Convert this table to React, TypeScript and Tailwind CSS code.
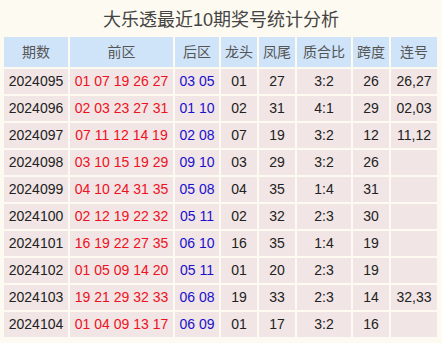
const rows = [
  ["2024095", "01 07 19 26 27", "03 05", "01", "27", "3:2", "26", "26,27"],
  ["2024096", "02 03 23 27 31", "01 10", "02", "31", "4:1", "29", "02,03"],
  ["2024097", "07 11 12 14 19", "02 08", "07", "19", "3:2", "12", "11,12"],
  ["2024098", "03 10 15 19 29", "09 10", "03", "29", "3:2", "26", ""],
  ["2024099", "04 10 24 31 35", "05 08", "04", "35", "1:4", "31", ""],
  ["2024100", "02 12 19 22 32", "05 11", "02", "32", "2:3", "30", ""],
  ["2024101", "16 19 22 27 35", "06 10", "16", "35", "1:4", "19", ""],
  ["2024102", "01 05 09 14 20", "05 11", "01", "20", "2:3", "19", ""],
  ["2024103", "19 21 29 32 33", "06 08", "19", "33", "2:3", "14", "32,33"],
  ["2024104", "01 04 09 13 17", "06 09", "01", "17", "3:2", "16", ""],
];

const heads = ["期数", "前区", "后区", "龙头", "凤尾", "质合比", "跨度", "连号"];
const widths = ["w-[64px]", "w-[103px]", "w-[44px]", "w-[36px]", "w-[36px]", "w-[54px]", "w-[36px]", "w-[46px]"];

export default function App() {
  return (
    <div className="w-[442px] h-[343px] bg-[#fdfaf1] font-['Liberation_Sans','Noto_Sans_CJK_SC',sans-serif] overflow-hidden">
      <div className="h-[37px] pt-[8px] text-center text-[18px] leading-[24px] text-[#444]">
        大乐透最近10期奖号统计分析
      </div>
      <table className="table-fixed border-separate border-spacing-[2px] -mt-[2px] ml-[2px] text-[14px] text-center">
        <thead>
          <tr>
            {heads.map((h, i) => (
              <th key={h} className={`${widths[i]} h-[30px] p-0 font-normal bg-[#cfe4f9] text-[#555]`}>
                {h}
              </th>
            ))}
          </tr>
        </thead>
        <tbody>
          {rows.map((r) => (
            <tr key={r[0]}>
              {r.map((c, i) => (
                <td
                  key={i}
                  className={`h-[25px] p-0 bg-[#f1e5e5] ${
                    i === 1 ? "text-[#ee1122]" : i === 2 ? "text-[#1a10cc]" : "text-[#222]"
                  }`}
                >
                  {c}
                </td>
              ))}
            </tr>
          ))}
        </tbody>
      </table>
    </div>
  );
}
